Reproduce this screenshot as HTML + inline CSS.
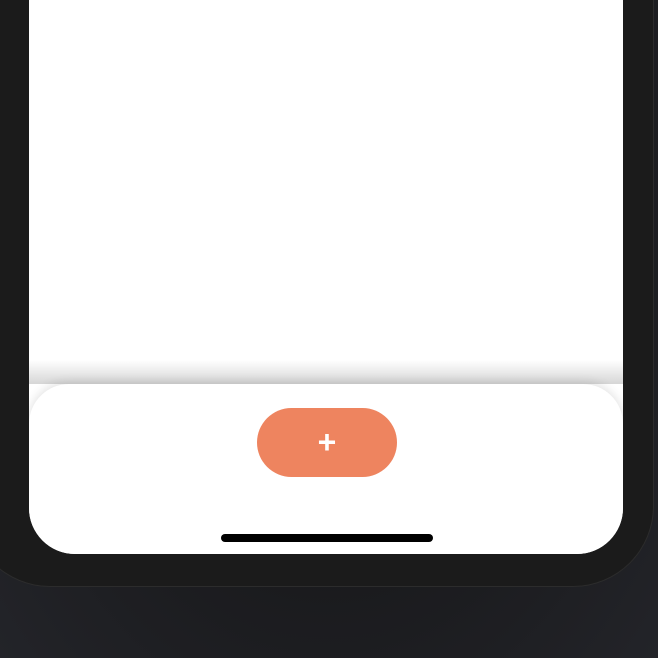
<!DOCTYPE html>
<html><head><style>
html,body{margin:0;padding:0}
body{width:658px;height:658px;overflow:hidden;position:relative;background:radial-gradient(ellipse at 50% 20%,#161618 40%,#232429 100%);font-family:"Liberation Sans",sans-serif}
.frame{position:absolute;left:-30px;top:-100px;width:683px;height:686px;background:#1b1b1b;border-radius:0 0 80px 80px;box-shadow:0 0 0 1px #2c2c2c}
.screen{position:absolute;left:29px;top:0;width:594px;height:554px;background:#fff;border-radius:0 0 46px 46px;overflow:hidden}
.shade{position:absolute;left:0;top:360px;width:594px;height:24px;background:linear-gradient(#fff,#d6d6d6)}
.bar{position:absolute;left:0;top:384px;width:594px;height:200px;background:#fff;border-radius:40px 40px 0 0;box-shadow:0 -2px 10px rgba(0,0,0,.12)}
.btn{position:absolute;left:228px;top:24px;width:140px;height:69px;border-radius:35px;background:#ee845f;color:#fff;font-size:32px;font-weight:bold;text-align:center;line-height:69px}
.home{position:absolute;left:192px;top:150px;width:212px;height:8px;border-radius:4px;background:#000}
</style></head><body>
<div class="frame"></div>
<div class="screen"><div class="shade"></div><div class="bar"><div class="btn">+</div><div class="home"></div></div></div>
</body></html>
